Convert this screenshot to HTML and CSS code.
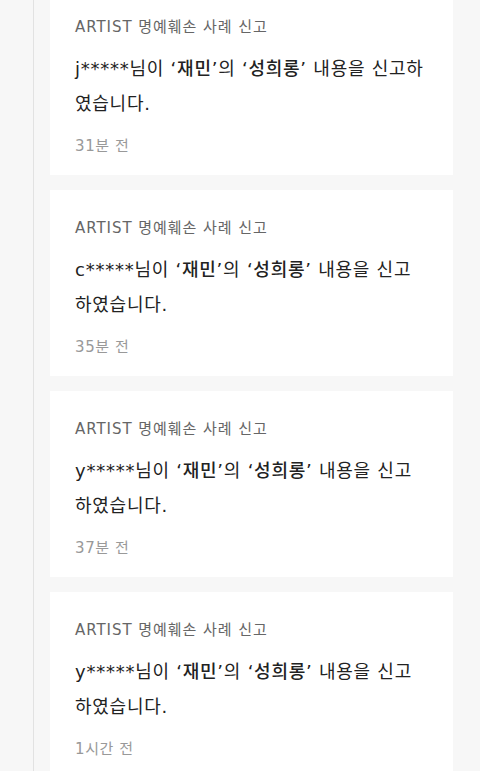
FILE: index.html
```html
<!DOCTYPE html>
<html lang="ko">
<head>
    <meta charset="UTF-8">
    <meta name="viewport" content="width=device-width, initial-scale=1.0">
    <title>신고 내역</title>
    <link rel="stylesheet" href="styles.css">
</head>
<body>
    <div class="timeline">
        <ul class="report-list">
            <li class="report-card">
                <p class="report-type">ARTIST 명예훼손 사례 신고</p>
                <p class="report-text">j*****님이 <strong>‘재민’</strong>의 <strong>‘성희롱’</strong> 내용을 신고하였습니다.</p>
                <p class="report-time">31분 전</p>
            </li>
            <li class="report-card">
                <p class="report-type">ARTIST 명예훼손 사례 신고</p>
                <p class="report-text">c*****님이 <strong>‘재민’</strong>의 <strong>‘성희롱’</strong> 내용을 신고하였습니다.</p>
                <p class="report-time">35분 전</p>
            </li>
            <li class="report-card">
                <p class="report-type">ARTIST 명예훼손 사례 신고</p>
                <p class="report-text">y*****님이 <strong>‘재민’</strong>의 <strong>‘성희롱’</strong> 내용을 신고하였습니다.</p>
                <p class="report-time">37분 전</p>
            </li>
            <li class="report-card">
                <p class="report-type">ARTIST 명예훼손 사례 신고</p>
                <p class="report-text">y*****님이 <strong>‘재민’</strong>의 <strong>‘성희롱’</strong> 내용을 신고하였습니다.</p>
                <p class="report-time">1시간 전</p>
            </li>
        </ul>
    </div>
</body>
</html>
```

FILE: styles.css
```css
body {
    margin: 0;
    background: #f7f7f7;
    font-family: "DejaVu Sans", "Noto Sans CJK KR", sans-serif;
    overflow: hidden;
}

.timeline {
    margin-left: 33px;
    border-left: 1px solid #e2e2e2;
    padding: 0 27px 0 16px;
    min-height: 100vh;
}

.report-list {
    list-style: none;
    margin: -11px 0 0;
    padding: 0;
    display: flex;
    flex-direction: column;
    gap: 15px;
}

.report-card {
    background: #fff;
    height: 186px;
    box-sizing: border-box;
    padding: 28px 27px 0 25px;
}

.report-card p {
    margin: 0;
}

.report-type {
    font-size: 15px;
    line-height: 20px;
    color: #666;
    letter-spacing: 0.95px;
}

.report-text {
    margin-top: 14px !important;
    font-size: 18px;
    line-height: 35px;
    color: #222;
    letter-spacing: 0.75px;
    word-break: break-all;
}

.report-text strong {
    font-weight: 500;
}

.report-time {
    margin-top: 15px !important;
    font-size: 15px;
    line-height: 20px;
    color: #999;
    letter-spacing: 0.6px;
}
```
